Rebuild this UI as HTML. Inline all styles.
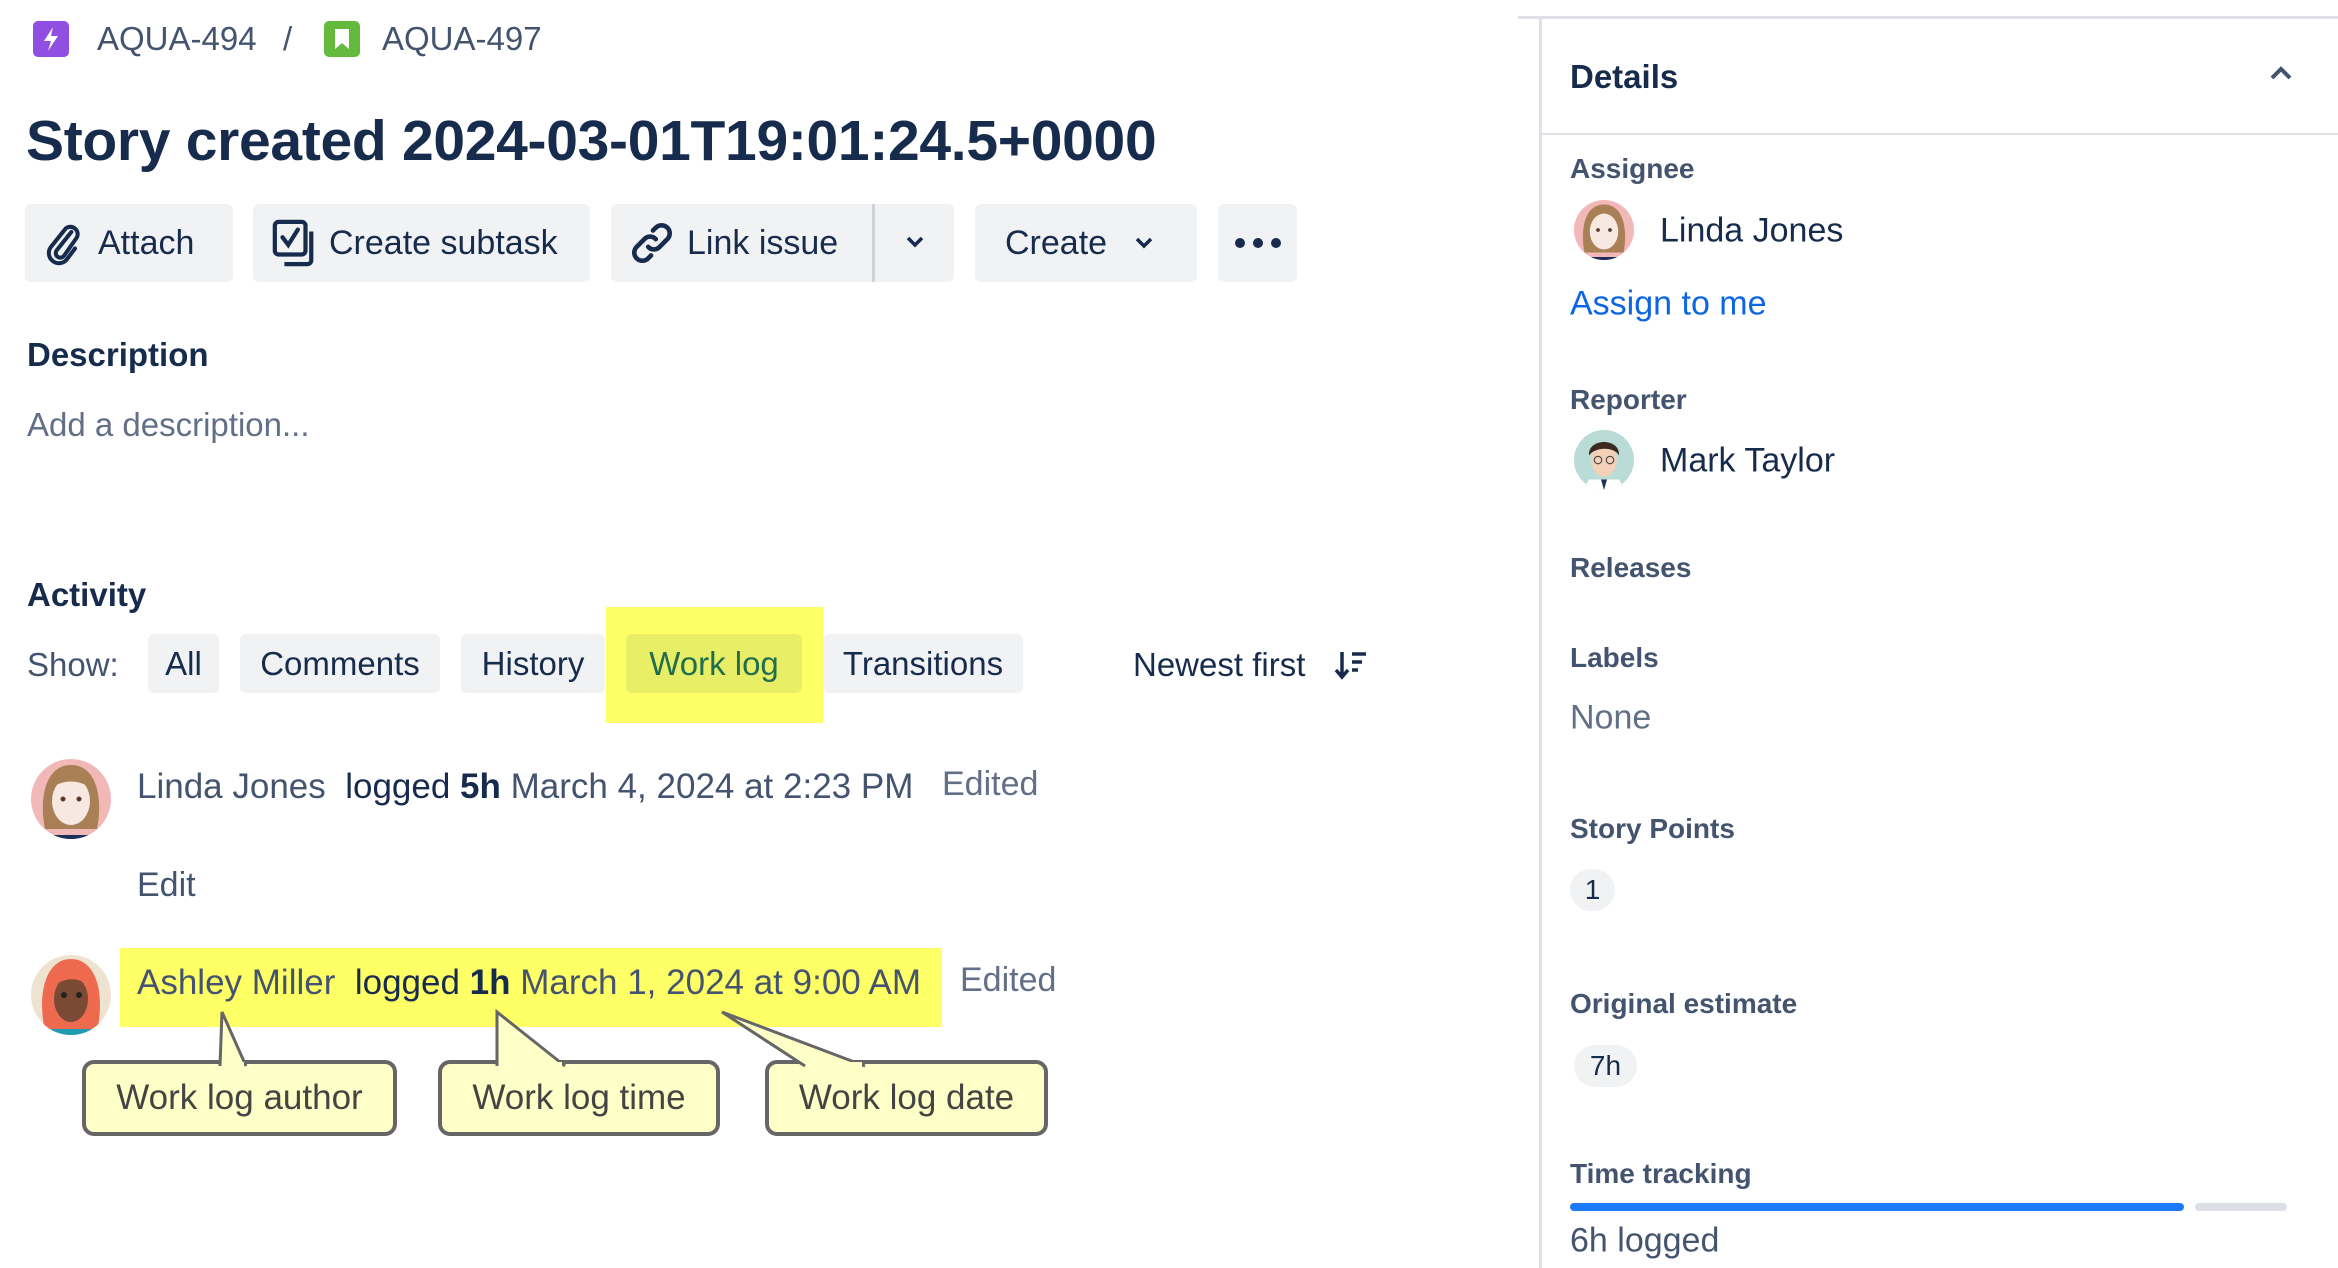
<!DOCTYPE html>
<html><head><meta charset="utf-8"><style>
*{margin:0;padding:0;box-sizing:border-box}
body{width:2338px;height:1268px;background:#fff;font-family:"Liberation Sans",sans-serif;color:#172b4d;position:relative;overflow:hidden}
.a{position:absolute;white-space:nowrap}
.btn{position:absolute;background:#f1f2f4;border-radius:6px;top:204px;height:78px;display:flex;align-items:center;font-size:34px;color:#172b4d}
.tab{position:absolute;top:634px;height:59px;background:#f1f2f4;border-radius:6px;font-size:33px;display:flex;align-items:center;justify-content:center;color:#172b4d}
.lbl{position:absolute;left:1570px;font-size:28px;font-weight:bold;color:#44546f;transform:translateY(-50%)}
.val{position:absolute;font-size:34px;color:#172b4d;transform:translateY(-50%)}
.call{position:absolute;top:1060px;height:76px;background:#ffffc8;border:4px solid #666;border-radius:12px;font-size:35px;color:#444;display:flex;align-items:center;justify-content:center}
</style></head><body>
<svg class="a" style="left:33px;top:21px" width="36" height="36"><rect width="36" height="36" rx="5" fill="#904ee2"/><path d="M20 6 L11 20 H18 L15 30 L25 15 H18 Z" fill="#fff"/></svg>
<div class="a" style="left:97px;top:20px;font-size:33px;color:#44546f">AQUA-494</div>
<div class="a" style="left:283px;top:20px;font-size:33px;color:#44546f">/</div>
<svg class="a" style="left:324px;top:21px" width="36" height="36"><rect width="36" height="36" rx="5" fill="#63ba3c"/><path d="M11 8 H25 V28 L18 22 L11 28 Z" fill="#fff"/></svg>
<div class="a" style="left:382px;top:20px;font-size:33px;color:#44546f">AQUA-497</div>
<div class="a" style="left:26px;top:108px;font-size:57px;font-weight:bold;letter-spacing:-0.3px">Story created 2024-03-01T19:01:24.5+0000</div>
<div class="btn" style="left:25px;width:208px"><svg style="margin-left:17px" width="44" height="50" viewBox="0 0 24 24" fill="none" stroke="#172b4d" stroke-width="2.2" stroke-linecap="round"><path d="M16 6 L8 16 a2.5 2.5 0 0 0 4 3 L19 9 a4 4 0 0 0 -6 -5 L5 14 a5.5 5.5 0 0 0 8.5 7 L18 15"/></svg><span style="margin-left:12px">Attach</span></div>
<div class="btn" style="left:253px;width:337px"><svg style="margin-left:18px" width="46" height="50" viewBox="0 0 24 26" fill="none" stroke="#172b4d" stroke-width="2.2"><rect x="2" y="2" width="16" height="17" rx="2"/><path d="M6 10 L9 14 L14 6" stroke-linecap="round"/><path d="M21 7 V22 a2 2 0 0 1 -2 2 H7"/></svg><span style="margin-left:12px">Create subtask</span></div>
<div class="btn" style="left:611px;width:343px"><svg style="margin-left:18px" width="46" height="46" viewBox="0 0 24 24" fill="none" stroke="#172b4d" stroke-width="2.4" stroke-linecap="round"><path d="M10 14 a4 4 0 0 0 6 0 l4 -4 a4 4 0 0 0 -6 -6 l-1.5 1.5"/><path d="M14 10 a4 4 0 0 0 -6 0 l-4 4 a4 4 0 0 0 6 6 l1.5 -1.5"/></svg><span style="margin-left:12px">Link issue</span>
<div style="position:absolute;left:261px;top:0;width:3px;height:78px;background:#d0d3d9"></div>
<svg style="position:absolute;left:293px;top:30px" width="22" height="16"><path d="M4 4 L11 11 L18 4" stroke="#172b4d" stroke-width="3.5" fill="none"/></svg></div>
<div class="btn" style="left:975px;width:222px"><span style="margin-left:30px">Create</span><svg style="margin-left:26px" width="22" height="16"><path d="M4 4 L11 11 L18 4" stroke="#172b4d" stroke-width="3.5" fill="none"/></svg></div>
<div class="btn" style="left:1218px;width:79px;justify-content:center"><svg width="48" height="12"><circle cx="6" cy="6" r="5" fill="#172b4d"/><circle cx="24" cy="6" r="5" fill="#172b4d"/><circle cx="42" cy="6" r="5" fill="#172b4d"/></svg></div>
<div class="a" style="left:27px;top:336px;font-size:33px;font-weight:bold">Description</div>
<div class="a" style="left:27px;top:406px;font-size:33px;color:#626f86">Add a description...</div>
<div class="a" style="left:27px;top:576px;font-size:33px;font-weight:bold">Activity</div>
<div class="a" style="left:606px;top:607px;width:217px;height:116px;background:#ffff66"></div>
<div class="a" style="left:27px;top:646px;font-size:33px;color:#44546f">Show:</div>
<div class="tab" style="left:148px;width:71px">All</div>
<div class="tab" style="left:240px;width:200px">Comments</div>
<div class="tab" style="left:461px;width:144px">History</div>
<div class="tab" style="left:626px;width:176px;background:#e8ee66;color:#216e4e">Work log</div>
<div class="tab" style="left:823px;width:200px">Transitions</div>
<div class="a" style="left:1133px;top:646px;font-size:33px">Newest first</div>
<svg class="a" style="left:1334px;top:648px" width="36" height="34"><path d="M8 4 V28 M2 22 L8 29 L14 22" stroke="#172b4d" stroke-width="3.5" fill="none"/><path d="M18 6 H32 M18 14 H28 M18 22 H24" stroke="#172b4d" stroke-width="3.5"/></svg>
<svg class="a" style="left:31px;top:759px" width="80" height="80" viewBox="0 0 80 80"><clipPath id="c1"><circle cx="40" cy="40" r="40"/></clipPath><g clip-path="url(#c1)"><rect width="80" height="80" fill="#f2b8b8"/><path d="M14 70 C8 40 14 6 40 6 C66 6 72 40 66 70 Z" fill="#a97f55"/><ellipse cx="40" cy="42" rx="19" ry="24" fill="#f8e8e2"/><path d="M20 30 C26 12 54 12 60 30 C50 20 30 20 20 30Z" fill="#a97f55"/><circle cx="32" cy="40" r="2.5" fill="#5a3a2a"/><circle cx="48" cy="40" r="2.5" fill="#5a3a2a"/><rect x="10" y="76" width="60" height="6" fill="#1d2e5a"/></g></svg>
<div class="a" style="left:137px;top:767px;font-size:35px;color:#44546f"><span>Linda Jones</span>&nbsp;&nbsp;<span style="color:#172b4d">logged <b>5h</b></span> March 4, 2024 at 2:23 PM</div>
<div class="a" style="left:942px;top:765px;font-size:34px;color:#626f86">Edited</div>
<div class="a" style="left:137px;top:866px;font-size:34px;color:#44546f">Edit</div>
<div class="a" style="left:120px;top:948px;width:822px;height:79px;background:#ffff66"></div>
<svg class="a" style="left:31px;top:955px" width="80" height="80" viewBox="0 0 80 80"><clipPath id="c2"><circle cx="40" cy="40" r="40"/></clipPath><g clip-path="url(#c2)"><rect width="80" height="80" fill="#ede3d0"/><path d="M14 76 C6 40 14 4 40 4 C66 4 74 40 66 76 Z" fill="#ee6a4f"/><ellipse cx="40" cy="44" rx="17" ry="23" fill="#7a4a35"/><path d="M20 34 C24 10 56 10 60 34 C50 20 30 22 20 34Z" fill="#ee6a4f"/><circle cx="33" cy="40" r="3" fill="#222"/><circle cx="48" cy="40" r="3" fill="#222"/><rect x="10" y="74" width="60" height="8" fill="#1e9bb0"/></g></svg>
<div class="a" style="left:137px;top:963px;font-size:35px;color:#44546f"><span>Ashley Miller</span>&nbsp;&nbsp;<span style="color:#172b4d">logged <b>1h</b></span> March 1, 2024 at 9:00 AM</div>
<div class="a" style="left:960px;top:961px;font-size:34px;color:#626f86">Edited</div>
<div class="call" style="left:82px;width:315px">Work log author</div>
<div class="call" style="left:438px;width:282px">Work log time</div>
<div class="call" style="left:765px;width:283px">Work log date</div>
<svg class="a" style="left:0;top:1000px" width="1100" height="70"><g fill="#ffffc8" stroke="#666" stroke-width="3"><path d="M220 66 L222 12 L246 66"/><path d="M497 66 L497 12 L565 66"/><path d="M805 66 L722 12 L865 66"/></g><g fill="#ffffc8"><rect x="222" y="62" width="22" height="8"/><rect x="522" y="62" width="40" height="8"/><rect x="812" y="62" width="50" height="8"/></g></svg>
<div class="a" style="left:1518px;top:16px;width:820px;height:3px;background:#dfe1e6"></div>
<div class="a" style="left:1539px;top:18px;width:3px;height:1250px;background:#dfe1e6"></div>
<div class="a" style="left:1542px;top:133px;width:796px;height:2px;background:#dfe1e6"></div>
<div class="a" style="left:1570px;top:58px;font-size:33px;font-weight:bold">Details</div>
<svg class="a" style="left:2268px;top:64px" width="26" height="18"><path d="M4 14 L13 5 L22 14" stroke="#44546f" stroke-width="4" fill="none"/></svg>
<div class="lbl" style="top:169px">Assignee</div>
<svg class="a" style="left:1574px;top:200px" width="60" height="60" viewBox="0 0 80 80"><g clip-path="url(#c1)"><rect width="80" height="80" fill="#f2b8b8"/><path d="M14 70 C8 40 14 6 40 6 C66 6 72 40 66 70 Z" fill="#a97f55"/><ellipse cx="40" cy="42" rx="19" ry="24" fill="#f8e8e2"/><circle cx="32" cy="40" r="2.5" fill="#5a3a2a"/><circle cx="48" cy="40" r="2.5" fill="#5a3a2a"/><rect x="10" y="76" width="60" height="6" fill="#1d2e5a"/></g></svg>
<div class="val" style="left:1660px;top:231px">Linda Jones</div>
<div class="val" style="left:1570px;top:304px;color:#0c66e4">Assign to me</div>
<div class="lbl" style="top:400px">Reporter</div>
<svg class="a" style="left:1574px;top:430px" width="60" height="60" viewBox="0 0 80 80"><g clip-path="url(#c1)"><rect width="80" height="80" fill="#b9dcd6"/><ellipse cx="40" cy="40" rx="17" ry="22" fill="#f3d1b8"/><path d="M20 34 C18 10 62 10 60 34 C54 22 28 22 20 34Z" fill="#3a2a22"/><circle cx="32" cy="40" r="5" fill="none" stroke="#444" stroke-width="1.5"/><circle cx="48" cy="40" r="5" fill="none" stroke="#444" stroke-width="1.5"/><path d="M12 80 L20 66 H60 L68 80Z" fill="#fff"/><path d="M36 66 L40 80 L44 66Z" fill="#1d2e5a"/></g></svg>
<div class="val" style="left:1660px;top:461px">Mark Taylor</div>
<div class="lbl" style="top:568px">Releases</div>
<div class="lbl" style="top:658px">Labels</div>
<div class="val" style="left:1570px;top:718px;color:#626f86">None</div>
<div class="lbl" style="top:829px">Story Points</div>
<div class="a" style="left:1570px;top:869px;width:45px;height:42px;background:#f1f2f4;border-radius:21px;font-size:28px;display:flex;align-items:center;justify-content:center">1</div>
<div class="lbl" style="top:1004px">Original estimate</div>
<div class="a" style="left:1574px;top:1045px;width:63px;height:42px;background:#f1f2f4;border-radius:21px;font-size:28px;display:flex;align-items:center;justify-content:center">7h</div>
<div class="lbl" style="top:1174px">Time tracking</div>
<div class="a" style="left:1570px;top:1203px;width:614px;height:8px;background:#1d7afc;border-radius:4px"></div>
<div class="a" style="left:2195px;top:1203px;width:92px;height:8px;background:#dcdfe4;border-radius:4px"></div>
<div class="val" style="left:1570px;top:1241px;color:#44546f">6h logged</div>
</body></html>
